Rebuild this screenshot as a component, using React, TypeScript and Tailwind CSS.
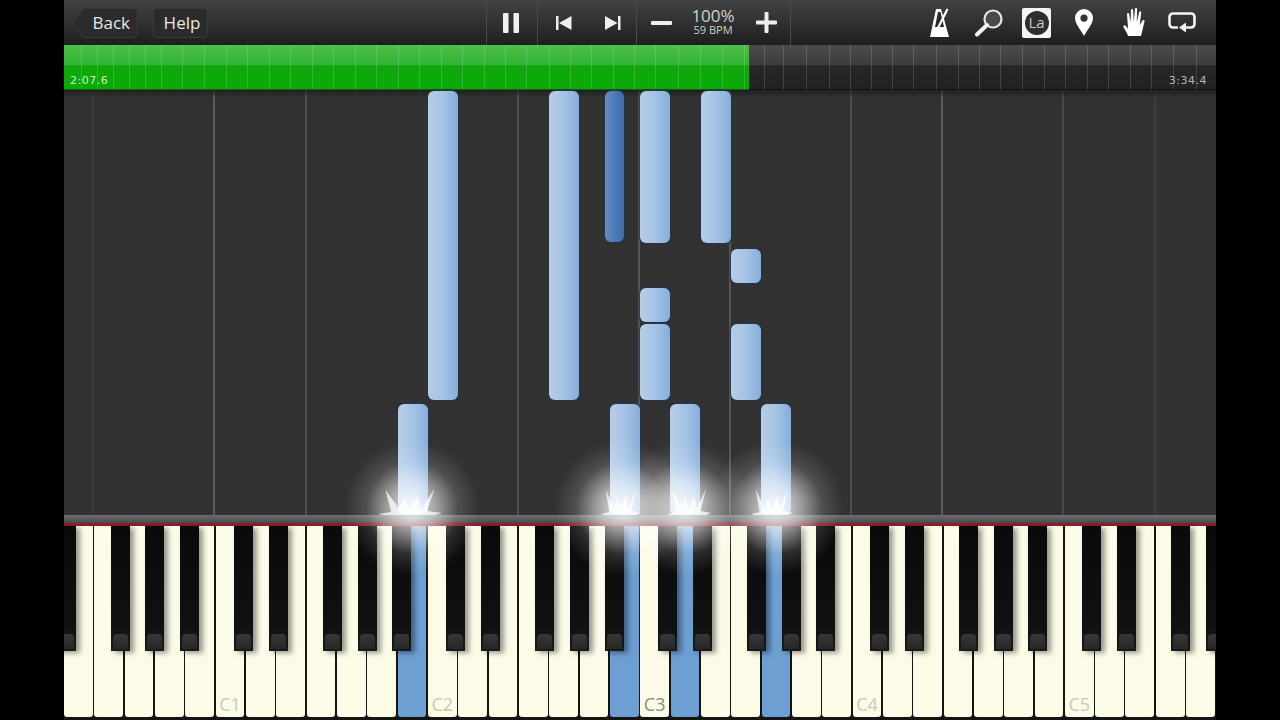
import React from "react";

const NOTES: [number, number, number, number, boolean?][] = [
  [428, 91, 30, 309],
  [549, 91, 30, 309],
  [605, 91, 19, 151, true],
  [640, 91, 30, 152],
  [701, 91, 30, 152],
  [731, 249, 30, 34],
  [640, 288, 30, 34],
  [640, 324, 30, 76],
  [731, 324, 30, 76],
  [398, 404, 30, 111],
  [610, 404, 30, 111],
  [670, 404, 30, 111],
  [761, 404, 30, 111],
];
const GRID: [number, number][] = [
  [93, 0.05], [214, 0.2], [306, 0.14], [518, 0.14], [639, 0.18], [730, 0.18], [851, 0.14], [942, 0.2], [1063, 0.12], [1155, 0.06],
];
const TICKS = [81, 97, 113, 129, 145, 161, 182, 204, 226, 247, 269, 290, 312, 333, 355, 376, 398, 419, 441, 462, 484, 505, 526, 549, 570, 591, 613, 634, 655, 678, 700, 722, 744, 764, 783, 806, 829, 850, 871, 892, 913, 936, 958, 979, 1000, 1022, 1044, 1065, 1087, 1108, 1130, 1151, 1173, 1196];
const BLUE = new Set([11, 18, 20, 23]);
const LABELS: Record<number, string> = { 5: "C1", 12: "C2", 19: "C3", 26: "C4", 33: "C5" };
const BLACK = [57, 110.7, 145, 180, 234, 269, 323, 358, 392, 446, 481, 535, 570, 604.5, 658, 693, 747, 782, 816, 870, 905, 959, 994, 1028, 1082, 1117, 1171, 1206];
const SPARKS: [number, number][] = [[410, 64], [621, 40], [689, 44], [772, 42]];
const GLOWS = [412, 622, 685, 776];

function Spark({ x, w }: { x: number; w: number }) {
  return (
    <svg className="absolute blur-[0.6px]" style={{ left: x - 64 - w / 2, top: 488 }} width={w} height="27" viewBox="0 0 68 27" preserveAspectRatio="none">
      <polygon fill="#ffffff" fillOpacity="0.75" points="0,26 14,24 8,2 22,20 28,10 34,21 42,8 46,21 60,1 52,23 68,25 60,27 6,27" />
    </svg>
  );
}

export default function App() {
  return (
    <div className="h-[720px] w-[1280px] overflow-hidden bg-black px-[64px] font-['Open_Sans','Noto_Sans',sans-serif]">
      <div className="relative flex h-full flex-col overflow-hidden">
        {/* toolbar */}
        <div className="flex h-[45px] shrink-0 items-center bg-gradient-to-b from-[#434343] to-[#1f1f1f] text-[#e8e8e8]">
          <div className="relative ml-[8px] flex h-[30px] w-[66px] items-center justify-end pr-[8px] text-[17px]">
            <svg className="absolute left-0 top-0" width="66" height="30" viewBox="0 0 66 30"><path d="M11.500.5H62a3.500 3.500 0 0 1 3.500 3.500v22a3.500 3.500 0 0 1-3.500 3.500H11.500L.5 15z" fill="#2b2b2b" stroke="#3a3a3a" /></svg>
            <span className="relative">Back</span>
          </div>
          <div className="ml-[15px] flex h-[30px] w-[55px] items-center justify-center rounded-[4px] border border-[#3a3a3a] bg-[#2b2b2b] pl-[3px] text-[17px]">Help</div>
          <div className="w-[278px]" />
          <div className="flex h-full w-[51px] items-center justify-center border-l border-[#4a4a4a]">
            <svg width="18" height="20" viewBox="0 0 18 20"><rect x="0" y="0" width="5.5" height="20" rx="1" fill="#f0f0f0" /><rect x="10.5" y="0" width="5.5" height="20" rx="1" fill="#f0f0f0" /></svg>
          </div>
          <div className="flex h-full w-[99px] items-center gap-[33px] border-l border-[#4a4a4a] pl-[18px]">
            <svg width="16" height="14" viewBox="0 0 16 14"><rect x="0" y="0" width="2.5" height="14" fill="#eee" /><polygon points="3,7 15.5,0 15.5,14" fill="#eee" /></svg>
            <svg width="16" height="14" viewBox="0 0 16 14"><polygon points="0,0 12.5,7 0,14" fill="#eee" /><rect x="13" y="0" width="2.5" height="14" fill="#eee" /></svg>
          </div>
          <div className="flex h-full w-[155px] items-center border-x border-[#4a4a4a]">
            <div className="ml-[14px] h-[4px] w-[21px] rounded-[1px] bg-[#eee]" />
            <div className="ml-[18px] flex w-[46px] flex-col items-center pb-[1px] text-[#cfcfcf]">
              <span className="text-[17px] leading-[16px]">100%</span>
              <span className="text-[11px] leading-[12px]">59 BPM</span>
            </div>
            <svg className="ml-[20px]" width="21" height="21" viewBox="0 0 21 21"><rect x="8.5" y="0" width="4" height="21" rx="1" fill="#eee" /><rect x="0" y="8.5" width="21" height="4" rx="1" fill="#eee" /></svg>
          </div>
          <div className="flex h-full flex-1 items-center">
            <svg className="ml-[139px]" width="19" height="31" viewBox="0 0 19 31">
              <polygon points="0,30 6,2 11,2 14,12 19,30" fill="#fff" />
              <polygon points="8,5 10.500,5 14,20 5,20" fill="#2a2a2a" />
              <line x1="17.500" y1="2" x2="8" y2="21" stroke="#fff" strokeWidth="2.2" />
            </svg>
            <svg className="ml-[25px]" width="30" height="29" viewBox="0 0 30 29"><circle cx="19" cy="11" r="8.5" fill="#4a4a4a" stroke="#e6e6e6" strokeWidth="2.2" /><line x1="13" y1="17" x2="3" y2="26.5" stroke="#f2f2f2" strokeWidth="4" strokeLinecap="round" /></svg>
            <div className="ml-[18px] flex h-[30px] w-[29px] items-center justify-center rounded-[2px] bg-[#f4f4f4]">
              <div className="flex h-[24px] w-[24px] items-center justify-center rounded-full bg-[#2e2e2e] text-[15px] leading-none text-[#c8c8c8]">La</div>
            </div>
            <svg className="ml-[24px]" width="18" height="27" viewBox="0 0 18 27"><path fill="#fff" fillRule="evenodd" d="M9 0a9 9 0 0 1 9 9c0 6-6 12-9 18C6 21 0 15 0 9a9 9 0 0 1 9-9zm0 5.5a3.6 3.6 0 1 0 0 7.2 3.6 3.6 0 0 0 0-7.2z" /></svg>
            <svg className="ml-[30px]" width="22" height="29" viewBox="0 0 22 29"><path fill="#fff" d="M5 28c-1-4-3.500-6-4.500-9-.5-1.600.8-2.300 2-1.200L5 20.500 4 6c0-1.500 1.900-1.500 2.100 0L7.500 14 8 2c0-1.500 2-1.500 2.100 0l.6 12L12 1.200c.1-1.500 2.100-1.400 2.100 0L13.800 14l2.400-10c.3-1.400 2.200-1 2 .4L16.800 17l2.700-4.500c.8-1.200 2.500-.4 2 1L18 28H5z" /></svg>
            <svg className="ml-[23px]" width="28" height="21" viewBox="0 0 28 21"><path fill="none" stroke="#f4f4f4" strokeWidth="2.6" d="M10 15.500H5a3.500 3.500 0 0 1-3.500-3.500V5A3.500 3.500 0 0 1 5 1.500h18A3.500 3.500 0 0 1 26.500 5v7a3.500 3.500 0 0 1-3.500 3.500h-7" /><polygon points="11,15.500 18,10.500 18,20.500" fill="#f4f4f4" /></svg>
          </div>
        </div>

        {/* progress */}
        <div className="relative h-[45px] shrink-0 bg-[linear-gradient(#4a4a4a,#3d3d3d_44%,#272727_46%,#222222)] text-[11px]">
          <div className="absolute inset-y-0 left-0 w-[685px] bg-[linear-gradient(#4cc04c,#33b433_44%,#10a80c_46%,#0ca808)]" />
          {TICKS.map((t) => (
            <div key={t} className="absolute inset-y-0 w-px bg-white/15" style={{ left: t - 64 }} />
          ))}
          <span className="absolute bottom-[2px] left-[6px] font-['DejaVu_Sans',sans-serif] text-[11px] leading-[14px] tracking-[0.5px] text-[#c4f5b4]">2:07.6</span>
          <span className="absolute bottom-[2px] right-[9px] font-['DejaVu_Sans',sans-serif] text-[11px] leading-[14px] tracking-[0.5px] text-[#b4b4b4]">3:34.4</span>
          <div className="absolute inset-x-0 bottom-0 h-px bg-black/40" />
        </div>

        {/* note canvas */}
        <div className="relative flex-1 bg-[#323232]">
          <div className="absolute inset-x-0 top-0 z-10 h-[8px] bg-gradient-to-b from-[#1c1c1c]/80 to-transparent" />
          {GRID.map(([x, o]) => (
            <div key={x} className="absolute inset-y-0 w-[2px] bg-white" style={{ left: x - 65, opacity: o }} />
          ))}
          {NOTES.map(([x, y, w, h, dark]) => (
            <div
              key={`${x}-${y}`}
              className={
                dark
                  ? "absolute z-20 rounded-[6px] bg-gradient-to-r from-[#6a8cba] via-[#4f7cb8] to-[#3f6ca8] shadow-[0_0_2px_1px_#24344e]"
                  : "absolute z-20 rounded-[6px] bg-gradient-to-r from-[#b8cde6] via-[#a4c3e6] to-[#87aed9] shadow-[0_0_2px_1px_#24344e]"
              }
              style={{ left: x - 64, top: y - 90, width: w, height: h }}
            />
          ))}
        </div>

        {/* fallboard */}
        <div className="h-[8px] shrink-0 bg-gradient-to-b from-[#6e6e6e] to-[#4a4a4a]" />
        <div className="h-[3px] shrink-0 bg-[#8e1c2a]" />

        {/* keyboard */}
        <div className="relative h-[194px] shrink-0 bg-[#141410]">
          <div className="flex h-[191px] gap-[1.5px]">
            {Array.from({ length: 38 }).map((_, i) => (
              <div
                key={i}
                className={
                  BLUE.has(i)
                    ? "flex h-full w-[28.83px] shrink-0 items-end justify-center rounded-b-[3px] bg-[#6d9fd3]"
                    : "flex h-full w-[28.83px] shrink-0 items-end justify-center rounded-b-[3px] bg-[#fcfbe7]"
                }
              >
                {LABELS[i] && (
                  <span className={i === 19 ? "pb-[3px] text-[18px] leading-[20px] text-[#8a8a80]" : "pb-[3px] text-[18px] leading-[20px] text-[#c8c8ba]"}>{LABELS[i]}</span>
                )}
              </div>
            ))}
          </div>
          {BLACK.map((x) => (
            <div
              key={x}
              className="absolute top-0 h-[125px] w-[19px] bg-gradient-to-b from-[#0a0a0a] via-[#101010] via-80% to-[#1a1a1a] shadow-[4px_2px_5px_rgba(0,0,0,0.4)]"
              style={{ left: x - 64 }}
            >
              <div className="absolute inset-x-[2px] bottom-[2px] h-[15px] rounded-t-[4px] bg-gradient-to-b from-[#383838] to-[#262626]" />
            </div>
          ))}
        </div>

        {/* glow over everything */}
        <div className="pointer-events-none absolute inset-0 z-30">
          {GLOWS.map((g) => (
            <div
              key={g}
              className="absolute h-[136px] w-[136px] rounded-full bg-[radial-gradient(circle,rgba(255,255,255,0.9)_0%,rgba(255,255,255,0.55)_25%,rgba(255,255,255,0.14)_48%,rgba(255,255,255,0)_70%)]"
              style={{ left: g - 64 - 68, top: 440 }}
            />
          ))}
          {SPARKS.map(([x, w]) => (
            <Spark key={x} x={x} w={w} />
          ))}
        </div>
      </div>
    </div>
  );
}
